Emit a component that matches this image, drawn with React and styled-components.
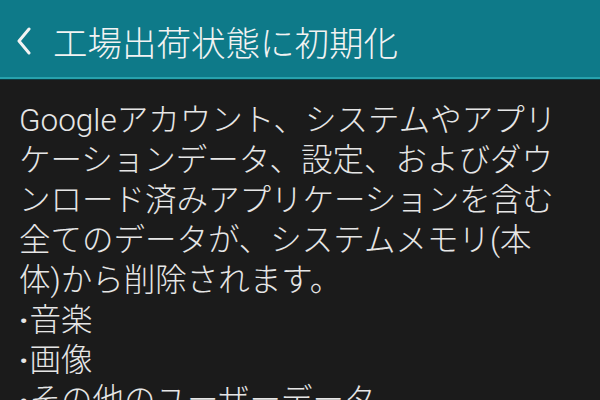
import React from "react";
import styled, { createGlobalStyle } from "styled-components";

const GlobalStyle = createGlobalStyle`
  html, body {
    margin: 0;
    padding: 0;
    background-color: #1b1b1b;
  }
  body {
    font-family: Roboto, "Noto Sans CJK JP", sans-serif;
    overflow: hidden;
  }
`;

const Screen = styled.div`
  width: 600px;
  height: 400px;
  background-color: #1b1b1b;
  overflow: hidden;
`;

const Header = styled.div`
  height: 77px;
  background-color: #0e7a89;
  border-bottom: 2px solid #27a2ad;
  box-shadow: 0 1px 0 #0b3a40;
  display: flex;
  align-items: center;
  padding-left: 17px;
  gap: 22px;
  box-sizing: content-box;
`;

const BackIcon = styled.svg`
  width: 14px;
  height: 28px;
  margin-top: 4px;
  flex-shrink: 0;
`;

const Title = styled.h1`
  margin: 0;
  padding-top: 6px;
  font-family: "Noto Sans CJK JP", sans-serif;
  font-weight: 300;
  font-size: 34.5px;
  line-height: 1;
  color: #f3f3f3;
  white-space: nowrap;
`;

const Body = styled.div`
  padding: 22px 19px 0 19px;
  font-size: 31.5px;
  font-weight: 300;
  line-height: 40px;
  color: #e6e6e6;
`;

const Line = styled.div`
  white-space: nowrap;
`;

const Item = styled(Line)`
  &::before {
    content: "·";
    font-family: Roboto, sans-serif;
    font-weight: 700;
    margin-right: 1px;
  }
`;

const paragraph = [
  "Googleアカウント、システムやアプリ",
  "ケーションデータ、設定、およびダウ",
  "ンロード済みアプリケーションを含む",
  "全てのデータが、システムメモリ(本",
  "体)から削除されます。",
];

const items = ["音楽", "画像", "その他のユーザーデータ"];

const App = () => {
  return (
    <Screen>
      <GlobalStyle />
      <Header>
        <BackIcon viewBox="0 0 14 28">
          <polyline
            points="12,2 2,14 12,26"
            fill="none"
            stroke="#f3f3f3"
            strokeWidth="3"
            strokeLinecap="round"
            strokeLinejoin="round"
          />
        </BackIcon>
        <Title>工場出荷状態に初期化</Title>
      </Header>
      <Body>
        {paragraph.map((text) => (
          <Line key={text}>{text}</Line>
        ))}
        {items.map((text) => (
          <Item key={text}>{text}</Item>
        ))}
      </Body>
    </Screen>
  );
};

export default App;
